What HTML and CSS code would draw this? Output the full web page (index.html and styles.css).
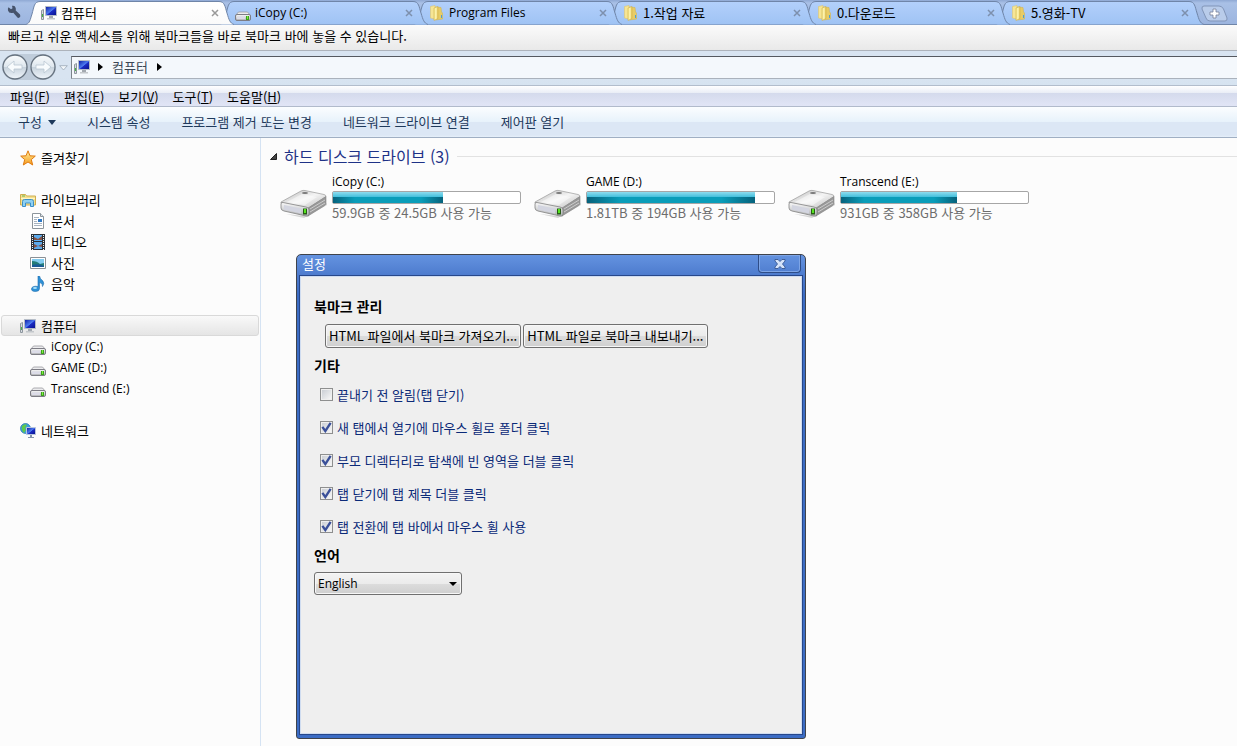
FILE: index.html
```
<!DOCTYPE html>
<html lang="ko">
<head>
<meta charset="utf-8">
<title>컴퓨터</title>
<link rel="stylesheet" href="styles.css">
</head>
<body>
<svg class="defs" width="0" height="0" aria-hidden="true">
  <defs>
    <linearGradient id="gTab" x1="0" y1="0" x2="0" y2="1"><stop offset="0" stop-color="#b3d0fb"/><stop offset="1" stop-color="#9fc3f4"/></linearGradient>
    <linearGradient id="gActive" x1="0" y1="0" x2="0" y2="1"><stop offset="0" stop-color="#ffffff"/><stop offset="1" stop-color="#fafafa"/></linearGradient>
    <linearGradient id="gFolder" x1="0" y1="0" x2="1" y2="0"><stop offset="0" stop-color="#f3e48a"/><stop offset=".5" stop-color="#fff6b4"/><stop offset="1" stop-color="#e0c050"/></linearGradient>
    <linearGradient id="gScreen" x1="0" y1="0" x2="1" y2="1"><stop offset="0" stop-color="#0a18a0"/><stop offset=".5" stop-color="#4d7cf0"/><stop offset=".55" stop-color="#1b2cc4"/><stop offset="1" stop-color="#060f88"/></linearGradient>
    <linearGradient id="gMetal" x1="0" y1="0" x2="0" y2="1"><stop offset="0" stop-color="#fafafa"/><stop offset="1" stop-color="#aeb0b2"/></linearGradient>
    <linearGradient id="gTop" x1="0" y1="0" x2="1" y2="1"><stop offset="0" stop-color="#b5b5b5"/><stop offset=".5" stop-color="#f4f4f4"/><stop offset="1" stop-color="#bcbcbc"/></linearGradient>
    <linearGradient id="gStar" x1="0" y1="0" x2="0" y2="1"><stop offset="0" stop-color="#fff0a0"/><stop offset="1" stop-color="#f59a1c"/></linearGradient>
    <linearGradient id="gRound" x1="0" y1="0" x2="0" y2="1"><stop offset="0" stop-color="#fafcfd"/><stop offset=".48" stop-color="#dfe7ee"/><stop offset=".52" stop-color="#c8d3dd"/><stop offset="1" stop-color="#f0f6fb"/></linearGradient>
    <symbol id="tabShape" viewBox="0 0 208 25"><path d="M0 24.5C4 23 4 20 6 14C8 7 8 1.5 14 1.5H193C199 1.5 199 7 201 13C203 20 204 23 208 24.5" stroke="#6f85a8"/></symbol>
    <symbol id="pc" viewBox="0 0 16 16"><path d="M.5 5.500l2-1v10h-2z" fill="#d6dbe0" stroke="#8d969e"/><path d="M1 9h1v3H1z" fill="#45b443"/><path d="M4.500 1.500h11v9h-11z" fill="url(#gScreen)" stroke="#b5bcc6"/><path d="M8 11h4v2H8z" fill="#a3a9b0"/><path d="M6 13h8v1.500H6z" fill="#c3c7cb"/></symbol>
    <symbol id="drive" viewBox="0 0 16 16"><path d="M3.500 5h9L15.500 8.500H.5z" fill="#ececee" stroke="#9a9a9e" stroke-width=".8"/><rect x=".5" y="7.500" width="15" height="6" rx="1.500" fill="url(#gMetal)" stroke="#7d7d85"/><path d="M2 9.500h8v2.500H2z" fill="#dcdce8"/><rect x="11" y="9" width="3" height="4" fill="#3c9f1e"/><path d="M12 9h1v3h-1z" fill="#7df03e"/></symbol>
    <symbol id="folder" viewBox="0 0 16 16"><path d="M6 2l6 .5.5 4.500 1 1v6l-7 1z" fill="#e8cc66" stroke="#d2b556" stroke-width=".6"/><path d="M1.500 1.500L6 .5V14l-4.500-1z" fill="#f6e594" stroke="#dfc670" stroke-width=".6"/><path d="M5 3l4-1.500v12L5 15.500z" fill="url(#gFolder)" stroke="#d2b24a" stroke-width=".6"/><path d="M12 10h1v3h-1z" fill="#4c9ed8"/></symbol>
    <symbol id="star" viewBox="0 0 16 16"><path d="M8 .8l2 5 5.300.3-4 3.500 1.400 5.400L8 12l-4.700 3 1.400-5.400-4-3.500L6 5.800z" fill="url(#gStar)" stroke="#e07b10"/></symbol>
    <symbol id="library" viewBox="0 0 16 16"><path d="M.5 13V2.500h5l1 1.500h9v9z" fill="#f4e08f" stroke="#cfae50"/><path d="M2 4h3" stroke="#67b64c"/><path d="M1 6.500h14" stroke="#fff6c4"/><path d="M2.500 14.500v-5q0-2 2-2h7q2 0 2 2v5h-3V11h-5v3.500z" fill="#8ed0f2" stroke="#3c8fc7"/></symbol>
    <symbol id="doc" viewBox="0 0 16 16"><path d="M2.500.5h8l3 3v12h-11z" fill="#fff" stroke="#8c949b"/><path d="M10.500.5v3h3" fill="#dde3e8" stroke="#8c949b"/><path d="M4 4.500h5M4 6.500h3M4 8.500h3M4 10.500h8M4 12.500h8" stroke="#a9b4c0"/><path d="M8 6h4v3H8z" fill="#2f79c6"/></symbol>
    <symbol id="video" viewBox="0 0 16 16"><path d="M1 0h14v16H1z" fill="#2b3138"/><path d="M4 1h8v6H4zM4 8h8v7H4z" fill="#5cabed"/><path d="M4 3l4 2 4-3v4H4zM4 10l4 2 4-2v3l-4-1-4 2z" fill="#855144"/><path d="M2.500 1v15M13.500 1v15" stroke="#f3f5f5" stroke-width="1" stroke-dasharray="1 1"/></symbol>
    <symbol id="photo" viewBox="0 0 16 16"><path d="M.5 2.500h15v11H.5z" fill="#fff" stroke="#8a9095"/><path d="M2 4h12v8H2z" fill="#82cbef"/><path d="M2 6q5 0 8 3l4-1v4H2z" fill="#237c77"/><path d="M2 10q6-2 12 1v1H2z" fill="#1a5b96"/></symbol>
    <symbol id="music" viewBox="0 0 16 16"><path d="M8 0h1.500Q10 3 12.500 4.500 15 7 12.500 10.500 13 7 9.500 6.500v6q0 3-4 3Q1 15.500 1.500 12.500 2.500 9.500 8 10.500z" fill="#2e91d6" stroke="#1c6dae" stroke-width=".6"/><ellipse cx="5" cy="12" rx="2" ry="1" fill="#a9e1fb"/></symbol>
    <symbol id="network" viewBox="0 0 16 16"><circle cx="5.500" cy="5.500" r="5" fill="#3a9edd" stroke="#2371a8" stroke-width=".7"/><path d="M2 3q3-3 5-1L5 5l1 2-2 3Q1 7 2 3z" fill="#5fc94b"/><path d="M6.500 4.500h9v7h-9z" fill="url(#gScreen)" stroke="#b9c5dc"/><path d="M10 12h2v2h2v1H8v-1h2z" fill="#8595ab"/></symbol>
    <symbol id="bigDrive" viewBox="0 0 48 30"><path d="M6 25l18 4 23-13v-2L24 27z" fill="#bbb" opacity=".6"/><path d="M1 13L21 2q2-1 4-.5l19 4q2 .5 2 2l-18 12L1 14z" fill="url(#gTop)" stroke="#9a9a9a" stroke-width=".7"/><path d="M7 13L22 5l15 3-12 8z" fill="#fff" opacity=".45"/><ellipse cx="25" cy="4" rx="3" ry="1" fill="#777"/><path d="M46 7.500V14q0 2-2 3L28 27v-8z" fill="#989898" stroke="#888" stroke-width=".6"/><path d="M30 20l15-9M30 23l15-9" stroke="#ccc"/><path d="M1 15q0-2 2-1.500L26 18q3 .5 3 3v4q0 3-3 2L4 22q-3-.7-3-3z" fill="url(#gMetal)" stroke="#808080" stroke-width=".8"/><path d="M4 16l17 3.500v5L4 20.500z" fill="#d3d5e0"/><path d="M23 19.500h4v6h-4z" fill="#275c16"/><path d="M24 20h2v4h-2z" fill="#55e51f"/></symbol>
  </defs>
</svg>

<header class="tabbar">
  <button class="wrench" aria-label="설정"><svg width="14" height="14" viewBox="0 0 14 14"><path d="M1.500 2.200l2.500 2 1.500-1L5 .8Q8 0 8.700 3q.3 1.300 0 2.500L13 9.500q1 2-.5 3T10 12L6.300 7.800Q2 9 1 5.500.5 3.500 1.500 2.200z" fill="#46536b"/></svg></button>
  <nav class="tabs" aria-label="탭">
    <div class="tab active"><svg class="shape" fill="url(#gActive)"><use href="#tabShape"/></svg><button class="name"><svg class="ico"><use href="#pc"/></svg><span>컴퓨터</span></button><button class="close" aria-label="닫기"><svg width="8" height="8" viewBox="0 0 8 8"><path d="M1 1l6 6M7 1L1 7"/></svg></button></div>
    <div class="tab"><svg class="shape" fill="url(#gTab)"><use href="#tabShape"/></svg><button class="name"><svg class="ico low"><use href="#drive"/></svg><span class="latin">iCopy (C:)</span></button><button class="close" aria-label="닫기"><svg width="8" height="8" viewBox="0 0 8 8"><path d="M1 1l6 6M7 1L1 7"/></svg></button></div>
    <div class="tab"><svg class="shape" fill="url(#gTab)"><use href="#tabShape"/></svg><button class="name"><svg class="ico"><use href="#folder"/></svg><span class="latin">Program Files</span></button><button class="close" aria-label="닫기"><svg width="8" height="8" viewBox="0 0 8 8"><path d="M1 1l6 6M7 1L1 7"/></svg></button></div>
    <div class="tab"><svg class="shape" fill="url(#gTab)"><use href="#tabShape"/></svg><button class="name"><svg class="ico"><use href="#folder"/></svg><span>1.작업 자료</span></button><button class="close" aria-label="닫기"><svg width="8" height="8" viewBox="0 0 8 8"><path d="M1 1l6 6M7 1L1 7"/></svg></button></div>
    <div class="tab"><svg class="shape" fill="url(#gTab)"><use href="#tabShape"/></svg><button class="name"><svg class="ico"><use href="#folder"/></svg><span>0.다운로드</span></button><button class="close" aria-label="닫기"><svg width="8" height="8" viewBox="0 0 8 8"><path d="M1 1l6 6M7 1L1 7"/></svg></button></div>
    <div class="tab"><svg class="shape" fill="url(#gTab)"><use href="#tabShape"/></svg><button class="name"><svg class="ico"><use href="#folder"/></svg><span>5.영화-TV</span></button><button class="close" aria-label="닫기"><svg width="8" height="8" viewBox="0 0 8 8"><path d="M1 1l6 6M7 1L1 7"/></svg></button></div>
  </nav>
  <button class="newtab" aria-label="새 탭"><svg width="27" height="17" viewBox="0 0 27 17"><path d="M3 1h15q3 0 4.500 3L26 13q.5 3-2 3H9q-3 0-4-3L1 4Q.5 1 3 1z" fill="#b9ccea" stroke="#8195b8"/><path d="M12 4h3v3h3v3h-3v3h-3v-3H9V7h3z" fill="#fff" stroke="#76829a" stroke-width=".8"/></svg></button>
</header>

<p class="bookmarks">빠르고 쉬운 액세스를 위해 북마크들을 바로 북마크 바에 놓을 수 있습니다.</p>

<div class="addressrow">
  <div class="navs">
    <button aria-label="뒤로"><svg width="26" height="26" viewBox="0 0 26 26"><circle cx="13" cy="13" r="12" fill="url(#gRound)" stroke="#66727f" stroke-width="1.300"/><path d="M5 13l7-6v4h8v4h-8v4z" fill="#f8fbfd" stroke="#b9c6d2" stroke-width=".8"/></svg></button>
    <button aria-label="앞으로"><svg width="26" height="26" viewBox="0 0 26 26"><circle cx="13" cy="13" r="12" fill="url(#gRound)" stroke="#66727f" stroke-width="1.300"/><path d="M21 13l-7-6v4H6v4h8v4z" fill="#f8fbfd" stroke="#b9c6d2" stroke-width=".8"/></svg></button>
  </div>
  <button class="recent" aria-label="최근 위치"><svg width="9" height="6" viewBox="0 0 9 6"><path d="M.7.7h7.600L4.500 5z" fill="#f3f7fa" stroke="#9aa8b6" stroke-width=".8"/></svg></button>
  <div class="address">
    <svg class="ico"><use href="#pc"/></svg>
    <svg width="5" height="8" viewBox="0 0 5 8"><path d="M0 0l5 4-5 4z"/></svg>
    <span>컴퓨터</span>
    <svg width="5" height="8" viewBox="0 0 5 8"><path d="M0 0l5 4-5 4z"/></svg>
  </div>
</div>

<nav class="menubar">
  <button>파일(<u>F</u>)</button><button>편집(<u>E</u>)</button><button>보기(<u>V</u>)</button><button>도구(<u>T</u>)</button><button>도움말(<u>H</u>)</button>
</nav>

<div class="toolbar">
  <button>구성<svg width="8" height="5" viewBox="0 0 8 5"><path d="M0 0h8L4 5z" fill="#1e395b"/></svg></button><button>시스템 속성</button><button>프로그램 제거 또는 변경</button><button>네트워크 드라이브 연결</button><button>제어판 열기</button>
</div>

<div class="body">
  <nav class="side">
    <ul><li><a href="#"><svg class="ico"><use href="#star"/></svg>즐겨찾기</a></li></ul>
    <ul>
      <li><a href="#"><svg class="ico"><use href="#library"/></svg>라이브러리</a></li>
      <li class="sub"><a href="#"><svg class="ico"><use href="#doc"/></svg>문서</a></li>
      <li class="sub"><a href="#"><svg class="ico"><use href="#video"/></svg>비디오</a></li>
      <li class="sub"><a href="#"><svg class="ico"><use href="#photo"/></svg>사진</a></li>
      <li class="sub"><a href="#"><svg class="ico"><use href="#music"/></svg>음악</a></li>
    </ul>
    <ul>
      <li class="selected"><a href="#"><svg class="ico"><use href="#pc"/></svg>컴퓨터</a></li>
      <li class="sub latin"><a href="#"><svg class="ico low"><use href="#drive"/></svg>iCopy (C:)</a></li>
      <li class="sub latin"><a href="#"><svg class="ico low"><use href="#drive"/></svg>GAME (D:)</a></li>
      <li class="sub latin"><a href="#"><svg class="ico low"><use href="#drive"/></svg>Transcend (E:)</a></li>
    </ul>
    <ul><li><a href="#"><svg class="ico"><use href="#network"/></svg>네트워크</a></li></ul>
  </nav>
  <main class="main">
    <h1><svg width="7" height="7" viewBox="0 0 7 7"><path d="M6.500.5v6h-6z" fill="#444" stroke="#222"/></svg><span>하드 디스크 드라이브 (3)</span></h1>
    <div class="drives">
      <section class="drive"><svg class="big"><use href="#bigDrive"/></svg><div><h2 class="latin">iCopy (C:)</h2><div class="bar"><div style="width:59%"></div></div><p>59.9GB 중 24.5GB 사용 가능</p></div></section>
      <section class="drive"><svg class="big"><use href="#bigDrive"/></svg><div><h2 class="latin">GAME (D:)</h2><div class="bar"><div style="width:90%"></div></div><p>1.81TB 중 194GB 사용 가능</p></div></section>
      <section class="drive"><svg class="big"><use href="#bigDrive"/></svg><div><h2 class="latin">Transcend (E:)</h2><div class="bar"><div style="width:62%"></div></div><p>931GB 중 358GB 사용 가능</p></div></section>
    </div>
  </main>
</div>

<div class="dialog" role="dialog" aria-labelledby="dlgTitle">
  <div class="titlebar"><span id="dlgTitle">설정</span><button aria-label="닫기"><svg width="12" height="10" viewBox="0 0 12 10"><path d="M1 .5h3l2 2 2-2h3v1.500L8.500 5 11 8v1.500H8l-2-2-2 2H1V8l2.500-3L1 2z" fill="#d5e3fa" stroke="#2f4d86" stroke-width=".8"/></svg></button></div>
  <form class="panel">
    <h3>북마크 관리</h3>
    <div class="actions"><button type="button">HTML 파일에서 북마크 가져오기...</button><button type="button">HTML 파일로 북마크 내보내기...</button></div>
    <h3>기타</h3>
    <div class="checks">
      <label><input type="checkbox">끝내기 전 알림(탭 닫기)</label>
      <label><input type="checkbox" checked>새 탭에서 열기에 마우스 휠로 폴더 클릭</label>
      <label><input type="checkbox" checked>부모 디렉터리로 탐색에 빈 영역을 더블 클릭</label>
      <label><input type="checkbox" checked>탭 닫기에 탭 제목 더블 클릭</label>
      <label><input type="checkbox" checked>탭 전환에 탭 바에서 마우스 휠 사용</label>
    </div>
    <h3><label for="lang">언어</label></h3>
    <select id="lang" class="latin"><option>English</option></select>
  </form>
</div>
</body>
</html>
```
FILE: styles.css
```
* { box-sizing: border-box; }
body {
  margin: 0;
  min-height: 100vh;
  display: flex;
  flex-direction: column;
  background: #fcfcfc;
  color: #000;
  font: 13px/20px "Noto Sans CJK KR", sans-serif;
  overflow: hidden;
}
h1, h2, h3, p, ul { margin: 0; padding: 0; font-weight: normal; }
button, select { font: inherit; color: inherit; }
button { margin: 0; padding: 0; border: 0; background: none; white-space: nowrap; }
svg { display: block; flex: none; }
.defs { position: absolute; }
.ico { width: 16px; height: 16px; }
.latin { font-family: "Open Sans", "Noto Sans", sans-serif; font-size: 12px; }

/* Tab strip */
.tabbar {
  display: flex;
  height: 25px;
  background: linear-gradient(#8fa9d4, #a9c0e6 3px, #9cb5df);
  border-bottom: 1px solid #6f85a8;
}
.wrench { width: 26px; padding: 5px 0 0 7px; flex: none; display: flex; }
.tabs { display: flex; height: 25px; }
.tab { position: relative; width: 194px; display: flex; align-items: center; }
.tab:nth-child(1) { z-index: 6; }
.tab:nth-child(2) { z-index: 5; }
.tab:nth-child(3) { z-index: 4; }
.tab:nth-child(4) { z-index: 3; }
.tab:nth-child(5) { z-index: 2; }
.tab:nth-child(6) { z-index: 1; }
.shape { position: absolute; left: 0; top: 0; width: 208px; height: 25px; }
.name { position: relative; flex: 1; display: flex; align-items: center; gap: 4px; padding-left: 15px; text-align: left; }
.name .low { margin-top: 5px; }
.close { position: relative; width: 8px; margin-right: 1px; }
.close svg { stroke: #7d90ad; stroke-width: 1.5; }
.active .close svg { stroke: #999; }
.newtab { display: flex; padding: 5px 0 0 11px; flex: none; }

.bookmarks {
  height: 26px;
  padding: 1px 8px 0;
  background: linear-gradient(#fbfbfb, #e9e9e9);
  border-bottom: 1px solid #adb3bb;
}

/* Address row */
.addressrow { display: flex; align-items: center; height: 35px; background: linear-gradient(#d8e4f1 26px, #d6e3f0); border-bottom: 1px solid #b2bdcc; }
.navs { display: flex; gap: 2px; margin-left: 2px; margin-top: -2px; border-radius: 13px; background: #bfccda; }
.recent { margin: 0 3px 0 3px; }
.address {
  flex: 1;
  height: 23px;
  margin-top: -2px;
  display: flex;
  align-items: center;
  gap: 9px;
  padding-left: 2px;
  background: #f4f8fc;
  border: 1px solid #aab2bc;
  border-top-color: #555960;
  border-left-color: #7c838c;
  border-right: 0;
  color: #3c4755;
}
.address .ico { margin-right: -1px; }

.menubar {
  display: flex;
  gap: 14px;
  height: 21px;
  padding: 1px 0 0 10px;
  background: linear-gradient(#fff, #e9edf6 7px, #d4daec 7px, #e0e4f5 19px);
  border-bottom: 1px solid #b1bacb;
}
.toolbar {
  display: flex;
  gap: 31px;
  height: 31px;
  padding-left: 18px;
  background: linear-gradient(#fbfdff, #e7f2fb 15px, #dce7f5 15px, #dce7f5 28px, #e6f0fa);
  border-bottom: 1px solid #a0afc3;
  color: #1e395b;
}
.toolbar button { display: flex; align-items: center; gap: 6px; }

/* Explorer body */
.body { flex: 1; display: flex; }
.side { width: 261px; flex: none; padding: 9px 1px 0; border-right: 1px solid #d5e3f3; display: flex; flex-direction: column; gap: 21px; }
.side ul { list-style: none; }
.side a { display: flex; align-items: center; gap: 5px; height: 21px; padding-left: 19px; color: inherit; text-decoration: none; }
.side .sub a { padding-left: 29px; }
.side .low { margin-top: 4px; }
.side .selected a { border: 1px solid #d9d9d9; border-radius: 3px; background: linear-gradient(#f9f9f9, #e5e5e5); padding-left: 18px; }

.main { flex: 1; min-width: 0; padding: 7px 0 0 9px; }
.main h1 { display: flex; align-items: center; gap: 7px; font-size: 16px; line-height: 22px; color: #1e3287; }
.main h1::after { content: ""; flex: 1; height: 1px; background: #e2e2e2; }
.drives { display: flex; flex-wrap: wrap; gap: 12px; padding: 5px 0 0 10px; }
.drive { display: flex; align-items: center; gap: 4px; width: 242px; }
.drive > div { width: 189px; }
.big { width: 48px; height: 30px; margin-top: 13px; }
.drive h2 { line-height: 19px; }
.drive p { color: #6d6d6d; line-height: 18px; white-space: nowrap; }
.bar { height: 13px; border: 1px solid #a6a6a6; border-radius: 2px; background: #fff; }
.bar div { height: 11px; background: linear-gradient(#8fdcee, #42bfdc 5px, transparent 5px), linear-gradient(90deg, #06627c, #0a9db9 20%, #0a9db9 80%, #06627c); }

/* Settings window, floating over the explorer */
.dialog {
  position: absolute;
  z-index: 10;
  left: 296px;
  top: 254px;
  width: 510px;
  height: 485px;
  display: flex;
  flex-direction: column;
  padding: 0 2px 3px;
  border: 1px solid #3f434b;
  border-radius: 5px 5px 3px 3px;
  background: linear-gradient(#6493e0, #4b79cc 22px, #3b6cc4 40px);
}
.titlebar { display: flex; justify-content: space-between; height: 20px; padding-left: 3px; color: #fff; line-height: 17px; }
.titlebar button { width: 43px; height: 18px; margin-right: 2px; display: flex; align-items: center; justify-content: center; border: 1px solid #2e4d88; border-top: 0; border-radius: 0 0 4px 4px; box-shadow: inset 0 0 0 1px #7ea5e6; }
.panel { flex: 1; padding: 20px 14px 0; background: #efefef; border: 1px solid #c9d9f1; outline: 1px solid #27478a; outline-offset: -1px; box-shadow: inset 0 0 0 1px #cfdcf0; }
.panel h3 { font-size: 14px; font-weight: bold; line-height: 20px; }
.actions { display: flex; gap: 2px; padding: 8px 0 7px 11px; }
.actions button, .panel select {
  height: 24px;
  border: 1px solid #707070;
  border-radius: 3px;
  background: linear-gradient(#f3f3f3, #ebebeb 11px, #dcdcdc 11px, #cfcfcf);
  box-shadow: inset 0 0 0 1px #f7f7f7;
}
.actions button { padding: 0 3px; line-height: 20px; }
.checks { padding: 3px 6px 2px; }
.checks label { display: flex; align-items: center; gap: 4px; height: 33px; color: #0b2a78; }
.checks input {
  appearance: none;
  width: 13px;
  height: 13px;
  margin: 0;
  border: 1px solid #8e8f8f;
  background: linear-gradient(135deg, #cbcfd5, #f6f6f6) content-box #f4f4f4;
  padding: 1px;
}
.checks input:checked {
  background: url("data:image/svg+xml,%3Csvg xmlns='http://www.w3.org/2000/svg' viewBox='0 0 11 11'%3E%3Cpath d='M2 5l2.500 3.500L9 1.500' fill='none' stroke='%233a5099' stroke-width='2'/%3E%3C/svg%3E") border-box, linear-gradient(135deg, #cbcfd5, #f6f6f6) content-box #f4f4f4;
}
.panel select {
  appearance: none;
  width: 148px;
  height: 23px;
  margin-top: 7px;
  padding: 0 3px;
  line-height: 20px;
  background: url("data:image/svg+xml,%3Csvg xmlns='http://www.w3.org/2000/svg' width='8' height='4'%3E%3Cpath d='M0 0h8L4 4z'/%3E%3C/svg%3E") no-repeat right 4px center, linear-gradient(#f3f3f3, #ebebeb 11px, #dcdcdc 11px, #cfcfcf);
}
```
